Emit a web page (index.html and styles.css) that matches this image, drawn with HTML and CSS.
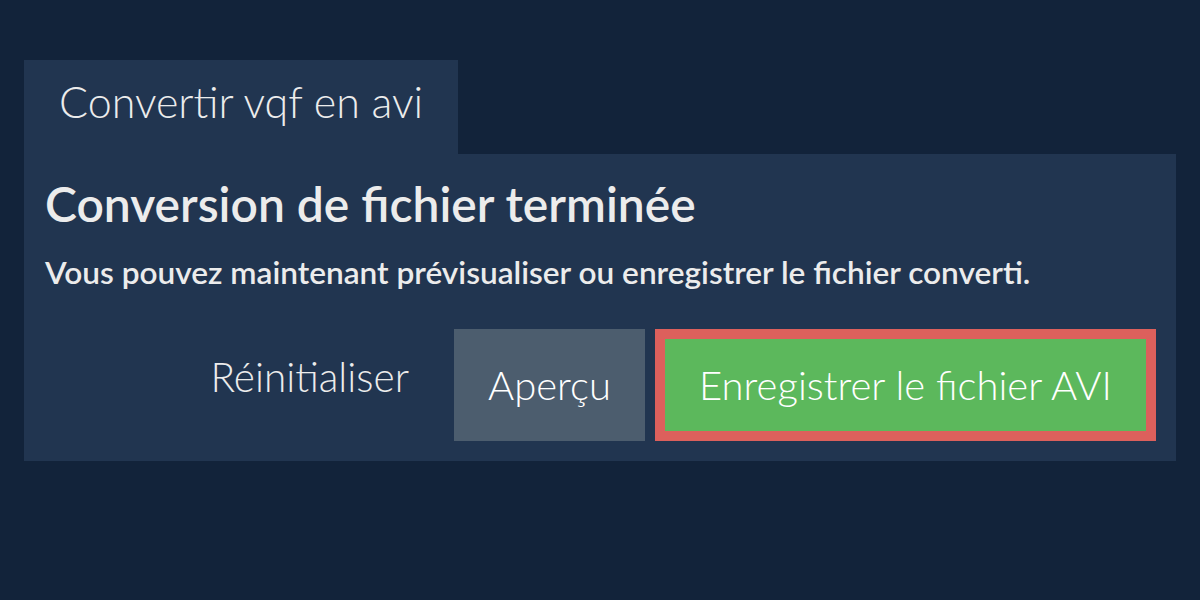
FILE: index.html
```html
<!DOCTYPE html>
<html lang="fr">
<head>
<meta charset="utf-8">
<link rel="stylesheet" href="styles.css">
</head>
<body>
<div class="wrap">
  <div class="tab">Convertir vqf en avi</div>
  <div class="panel">
    <h1 class="title">Conversion de fichier terminée</h1>
    <p class="desc">Vous pouvez maintenant prévisualiser ou enregistrer le fichier converti.</p>
    <div class="actions">
      <span class="reset">Réinitialiser</span>
      <span class="btn preview">Aperçu</span>
      <span class="btn save"><span class="save-inner">Enregistrer le fichier AVI</span></span>
    </div>
  </div>
</div>
</body>
</html>
```
FILE: styles.css
```css
html, body {
  margin: 0;
  padding: 0;
  background: #12233a;
  width: 1200px;
  height: 600px;
  overflow: hidden;
  font-family: Lato, "Liberation Sans", sans-serif;
  color: #ececec;
}
.wrap {
  padding: 60px 24px 0 24px;
}
.tab {
  display: inline-block;
  background: #213550;
  font-weight: 300;
  font-size: 43px;
  height: 94px;
  line-height: 84px;
  padding: 0 35px;
  box-sizing: border-box;
  width: 434px;
  white-space: nowrap;
}
.panel {
  background: #213550;
  padding: 21px 20px 20px 21px;
  height: 307px;
  box-sizing: border-box;
}
.title {
  margin: 0;
  font-weight: 600;
  font-size: 48px;
  line-height: 58px;
  white-space: nowrap;
}
.desc {
  margin: 20px 0 0 0;
  font-weight: 600;
  font-size: 31.6px;
  line-height: 38px;
  white-space: nowrap;
}
.actions {
  display: flex;
  justify-content: flex-end;
  align-items: stretch;
  gap: 10px;
  margin-top: 38px;
  height: 112px;
}
.reset {
  align-self: flex-start;
  font-weight: 300;
  font-size: 40.5px;
  line-height: 96px;
  padding: 0 35px 0 0;
  white-space: nowrap;
}
.btn {
  display: flex;
  align-items: center;
  justify-content: center;
  font-weight: 300;
  font-size: 40px;
  color: #ffffff;
  box-sizing: border-box;
  white-space: nowrap;
}
.preview {
  background: #4c5d6e;
  width: 191px;
}
.save {
  background: #dc605c;
  padding: 10px;
  width: 501px;
}
.save-inner {
  background: #5cb85c;
  width: 100%;
  height: 100%;
  display: flex;
  align-items: center;
  justify-content: center;
}
```
